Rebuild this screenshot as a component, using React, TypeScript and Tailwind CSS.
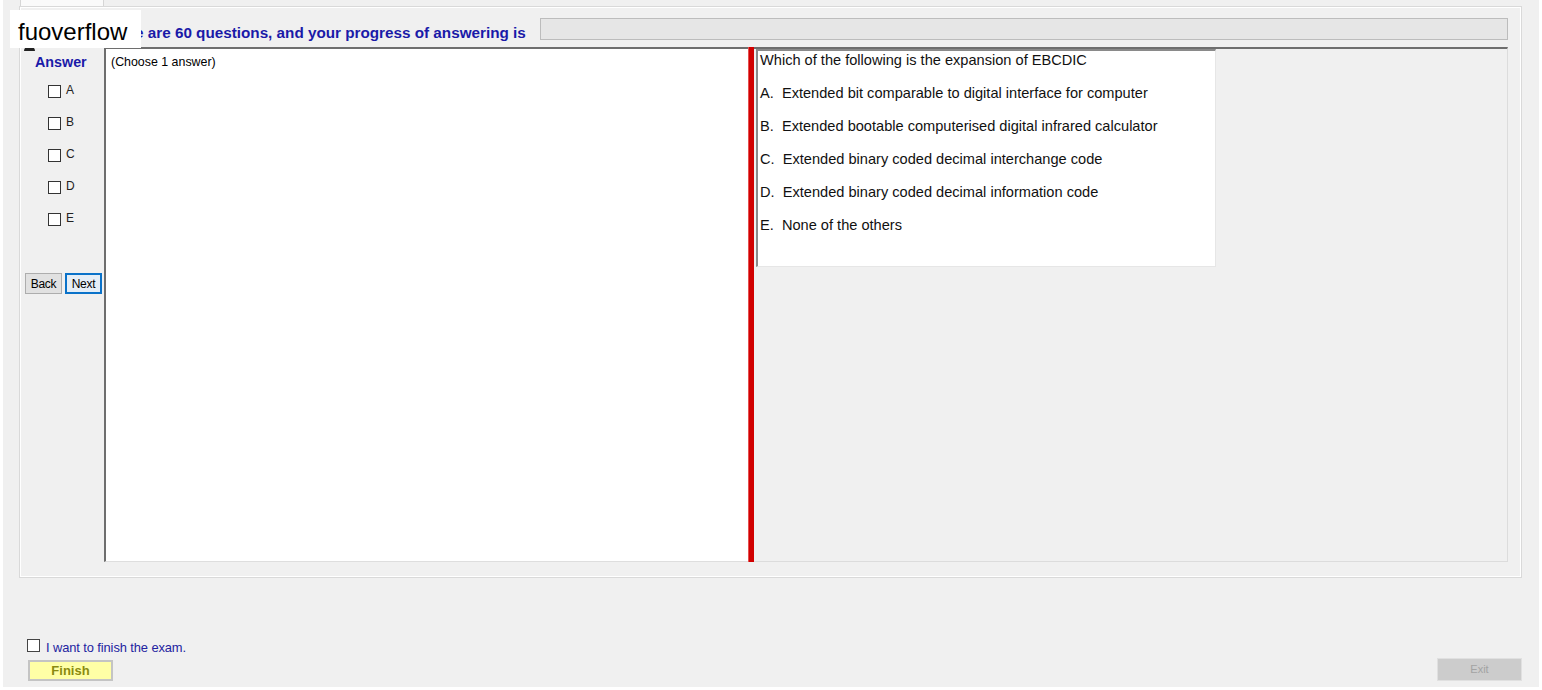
import React from "react";

const options = [
  { key: "A", text: "Extended bit comparable to digital interface for computer" },
  { key: "B", text: "Extended bootable computerised digital infrared calculator" },
  { key: "C", text: "Extended binary coded decimal interchange code" },
  { key: "D", text: "Extended binary coded decimal information code" },
  { key: "E", text: "None of the others" },
];

function Box({ className = "" }: { className?: string }) {
  return <div className={`w-[13px] h-[13px] border border-[#333] bg-white ${className}`} />;
}

export default function App() {
  return (
    <div className="relative w-[1542px] h-[690px] bg-white font-['Liberation_Sans',Arial,sans-serif] text-black overflow-hidden">
      {/* Window */}
      <div className="ml-[3px] w-[1536px] h-[687px] bg-[#f0f0f0] flex flex-col">
        {/* Tab strip */}
        <div className="h-[6px] flex">
          <div className="ml-[17px] w-[84px] h-[6px] bg-[#fafafa] border-x border-[#d6d6d6]" />
        </div>

        {/* Tab page */}
        <div className="ml-[16px] w-[1503px] h-[572px] border border-[#d9d9d9] shadow-[inset_1px_1px_0_#ffffff,inset_-1px_-1px_0_#ffffff] pl-[5px] pr-[13px] pt-[11px]">
          {/* Header */}
          <div className="h-[22px] flex items-center">
            <span className="ml-[77px] pt-[8px] text-[15.25px] font-bold text-[#1a1aa8] whitespace-nowrap">
              There are 60 questions, and your progress of answering is
            </span>
            <div className="ml-auto w-[968px] h-[22px] bg-[#e6e6e6] border border-[#bcbcbc]" />
          </div>

          {/* Main */}
          <div className="mt-[7px] h-[515px] flex">
            {/* Answer column */}
            <div className="w-[79px] flex flex-col">
              <div className="pt-[7px] pl-[10px] text-[14.3px] font-bold text-[#1a1aa8] leading-[16px]">Answer</div>
              <div className="mt-[15px] flex flex-col gap-[19px] pl-[23px]">
                {options.map((o) => (
                  <div key={o.key} className="flex items-center h-[13px]">
                    <Box />
                    <span className="ml-[5px] text-[12px] text-[#222] leading-[13px] -mt-[3px]">{o.key}</span>
                  </div>
                ))}
              </div>
              <div className="mt-[47px] flex gap-[3px]">
                <button className="w-[37px] h-[21px] bg-[#e1e1e1] border border-[#adadad] text-[12px] leading-none tracking-[-0.3px]">
                  Back
                </button>
                <button className="w-[37px] h-[21px] bg-[#e5eef7] border-2 border-[#0a72c9] text-[12px] leading-none tracking-[-0.3px]">
                  Next
                </button>
              </div>
            </div>

            {/* Text box */}
            <div className="w-[644px] h-[515px] bg-white border-l-2 border-t-2 border-[#6e6e6e] border-b border-b-[#dedede] pl-[5px] pt-[6px]">
              <div className="text-[12.4px] leading-[14px]">(Choose 1 answer)</div>
            </div>

            {/* Splitter */}
            <div className="w-[6px] h-[515px] bg-[#d10000] border-l border-[#e55050]" />

            {/* Right panel */}
            <div className="flex-1 h-[515px] bg-[#f0f0f0] border-t-2 border-[#6e6e6e] border-b border-r border-b-[#dcdcdc] border-r-[#dcdcdc] pl-[2px]">
              <div className="w-[460px] h-[218px] bg-white border-l-2 border-t-2 border-[#8a8a8a] border-b border-r border-b-[#e6e6e6] border-r-[#e6e6e6] pl-[2px] pt-[1px] text-[14.6px] text-[#111] leading-[16px]">
                <div>Which of the following is the expansion of EBCDIC</div>
                {options.map((o) => (
                  <div key={o.key} className="mt-[17px] whitespace-pre">
                    {o.key}.{"  "}
                    {o.text}
                  </div>
                ))}
              </div>
            </div>
          </div>
        </div>

        {/* Bottom */}
        <div className="flex-1 flex items-end justify-between pb-[6px]">
          <div className="ml-[24px] flex flex-col">
            <div className="flex items-center">
              <Box className="border-[#444]" />
              <span className="ml-[6px] text-[12.9px] text-[#2323a0] leading-[14px] mt-[6px] tracking-[-0.1px]">
                I want to finish the exam.
              </span>
            </div>
            <button className="mt-[5px] ml-[1px] w-[85px] h-[21px] bg-[#ffffa6] border-2 border-[#c4c4c4] text-[13px] font-bold text-[#8a8a10] leading-none">
              Finish
            </button>
          </div>
          <button className="mr-[17px] w-[85px] h-[23px] bg-[#cccccc] border border-[#e0e0e0] text-[11px] text-[#a3a3a3] leading-none">
            Exit
          </button>
        </div>
      </div>

      {/* Watermark overlay */}
      <div className="absolute left-[24px] top-[46px] w-[11px] h-[5px] rounded-t-full bg-[#222]" />
      <div className="absolute left-[10px] top-[10px] w-[131px] h-[38px] bg-white flex items-center pl-[8px] pt-[5px] text-[24px] text-black leading-none">
        fuoverflow
      </div>
    </div>
  );
}
